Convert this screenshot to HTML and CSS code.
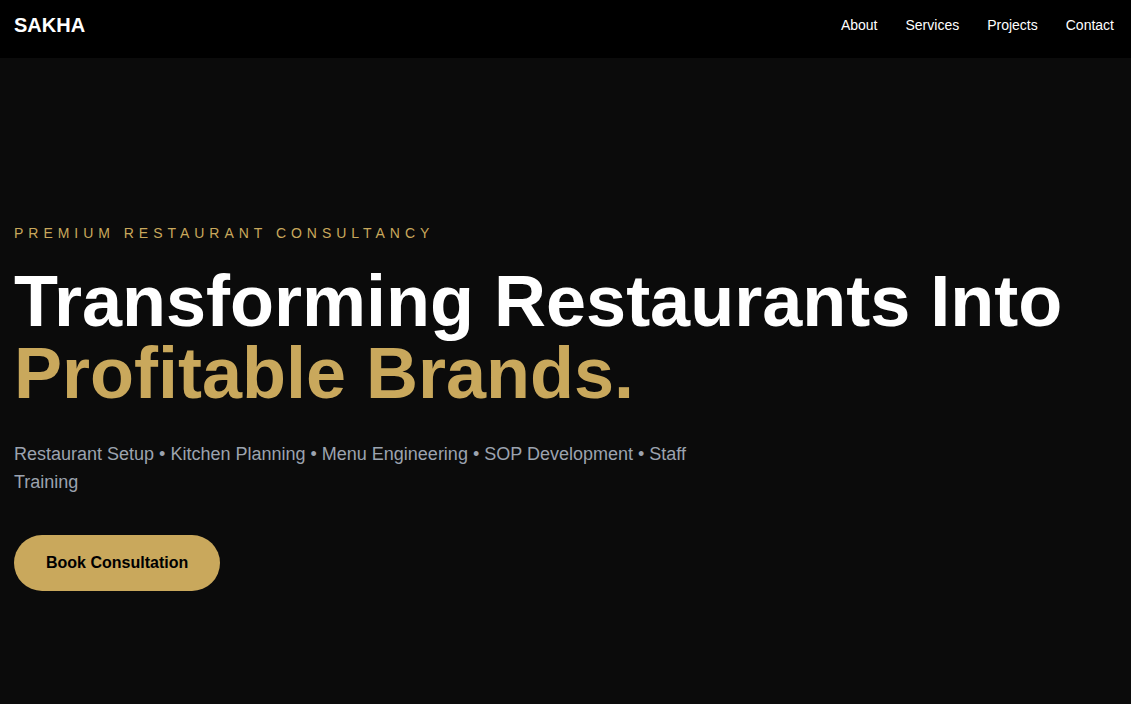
FILE: index.html
```html
<!DOCTYPE html>
<html lang="en">
<head>
<meta charset="utf-8">
<title>SAKHA</title>
<link rel="stylesheet" href="styles.css">
</head>
<body>
<header class="topbar">
  <a class="logo" href="#">SAKHA</a>
  <nav class="nav">
    <a href="#">About</a>
    <a href="#">Services</a>
    <a href="#">Projects</a>
    <a href="#">Contact</a>
  </nav>
</header>
<main class="hero">
  <div class="hero-inner">
    <p class="eyebrow">PREMIUM RESTAURANT CONSULTANCY</p>
    <h1 class="title">Transforming Restaurants Into<br><span class="gold">Profitable Brands.</span></h1>
    <p class="lead">Restaurant Setup • Kitchen Planning • Menu Engineering • SOP Development • Staff Training</p>
    <a class="cta" href="#">Book Consultation</a>
  </div>
</main>
</body>
</html>
```
FILE: styles.css
```css
* { box-sizing: border-box; }
html, body { margin: 0; padding: 0; }
body {
  background: #0b0b0b;
  color: #fff;
  font-family: "Liberation Sans", Arial, sans-serif;
}
a { text-decoration: none; color: inherit; }

.topbar {
  height: 58px;
  background: #000;
  display: flex;
  align-items: center;
  justify-content: space-between;
  padding: 0 17px 8px 14px;
}
.logo {
  font-size: 20px;
  font-weight: 700;
  color: #fff;
}
.nav {
  display: flex;
  gap: 28px;
}
.nav a {
  font-size: 14px;
  color: #fff;
}

.hero {
  min-height: 100vh;
  display: flex;
  align-items: center;
  padding: 0 14px 4px;
}
.hero-inner { width: 100%; }
.eyebrow {
  margin: 0 0 24px;
  color: #c9a85c;
  font-size: 14px;
  letter-spacing: 0.355em;
}
.title {
  margin: 0 0 31px;
  font-size: 72px;
  line-height: 1;
  font-weight: 700;
  color: #fff;
}
.gold { color: #c9a85c; }
.lead {
  margin: 0 0 39px;
  max-width: 700px;
  font-size: 18px;
  line-height: 28px;
  color: #9ca3af;
}
.cta {
  display: inline-block;
  background: #c9a85c;
  color: #000;
  font-weight: 700;
  font-size: 16px;
  padding: 19px 32px;
  border-radius: 28px;
}
```
